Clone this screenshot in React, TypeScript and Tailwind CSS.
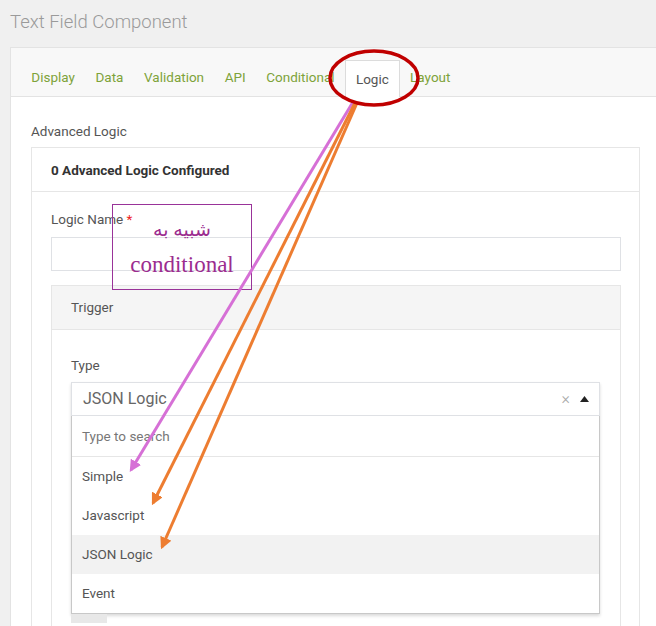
import * as React from "react";

const tabs = ["Display", "Data", "Validation", "API", "Conditional", "Logic", "Layout"];
const options = ["Simple", "Javascript", "JSON Logic", "Event"];

function Annotations() {
  return (
    <svg
      className="pointer-events-none absolute left-0 top-0"
      width={656}
      height={626}
      viewBox="0 0 656 626"
    >
      <defs>
        <marker id="head-pink" markerWidth="4" markerHeight="4" refX="3.2" refY="2" orient="auto">
          <path d="M0,0 L4,2 L0,4 z" fill="#d670d6" />
        </marker>
        <marker id="head-orange" markerWidth="4" markerHeight="4" refX="3.2" refY="2" orient="auto">
          <path d="M0,0 L4,2 L0,4 z" fill="#ed7d31" />
        </marker>
      </defs>
      <line x1="353" y1="102" x2="131" y2="470" stroke="#d670d6" strokeWidth="3" markerEnd="url(#head-pink)" />
      <line x1="355" y1="103" x2="153" y2="503" stroke="#ed7d31" strokeWidth="3" markerEnd="url(#head-orange)" />
      <line x1="357" y1="103" x2="162" y2="547" stroke="#ed7d31" strokeWidth="3" markerEnd="url(#head-orange)" />
      <ellipse cx="374" cy="78" rx="44" ry="27" fill="none" stroke="#c00000" strokeWidth="3.5" />
    </svg>
  );
}

export default function App() {
  return (
    <div className="relative h-[626px] w-[656px] overflow-hidden bg-[#f0f0f0] font-['Roboto',sans-serif]">
      <div className="h-[47px] pl-[10px] pt-[9px] text-[18.5px] font-light text-[#9a9a9a]">
        Text Field Component
      </div>

      <div className="ml-[10px] w-[700px] border-l border-t border-[#e3e3e3] bg-white">
        {/* Tabs */}
        <div className="flex h-[49px] items-end border-b border-[#e3e3e3] bg-[#f8f8f8] pl-[10px]">
          {tabs.map((t) =>
            t === "Logic" ? (
              <div
                key={t}
                className="-mb-px flex h-[37px] items-center border border-b-0 border-[#dcdcdc] bg-white px-[10px] text-[13.5px] text-[#555]"
              >
                {t}
              </div>
            ) : (
              <div key={t} className="flex h-[37px] items-center px-[10.3px] text-[13.5px] text-[#7ea33a]">
                {t}
              </div>
            )
          )}
        </div>

        {/* Content */}
        <div className="pl-[20px] pt-[24px]">
          <div className="mb-[6px] text-[13.5px] text-[#555]">Advanced Logic</div>

          <div className="w-[609px] border border-[#e6e6e6]">
            <div className="flex h-[44px] items-center border-b border-[#e6e6e6] px-[19px] text-[13.5px] font-bold text-[#333]">
              0 Advanced Logic Configured
            </div>

            <div className="px-[19px] pt-[17px]">
              <div className="mb-[7px] text-[13.5px] text-[#555]">
                Logic Name <span className="text-[#e22]">*</span>
              </div>
              <div className="mb-[14px] h-[34px] w-[570px] border border-[#dfe1e5]" />

              <div className="w-[570px] border border-[#e6e6e6]">
                <div className="flex h-[44px] items-center border-b border-[#e6e6e6] bg-[#f5f5f5] px-[19px] text-[13.5px] text-[#555]">
                  Trigger
                </div>
                <div className="h-[300px] px-[19px] pt-[25px]">
                  <div className="mb-[7px] text-[13.5px] text-[#555]">Type</div>

                  <div className="w-[529px] shadow-[0_2px_3px_rgba(0,0,0,0.15)]">
                    <div className="flex h-[34px] items-center justify-between border border-[#dfe1e5] pl-[11px] pr-[10px]">
                      <span className="text-[16px] text-[#666]">JSON Logic</span>
                      <div className="flex items-center gap-[10px]">
                        <span className="text-[16px] font-light text-[#aaa]">×</span>
                        <svg width="9" height="6" viewBox="0 0 9 6">
                          <path d="M0,6 L4.5,0 L9,6 z" fill="#222" />
                        </svg>
                      </div>
                    </div>
                    <div className="border border-t-0 border-[#c8c8c8]">
                      <div className="flex h-[41px] items-center border-b border-[#e6e6e6] px-[10px] text-[13.5px] text-[#777]">
                        Type to search
                      </div>
                      {options.map((o) => (
                        <div
                          key={o}
                          className={
                            o === "JSON Logic"
                              ? "flex h-[39px] items-center bg-[#f2f2f2] px-[10px] text-[13.5px] text-[#555]"
                              : "flex h-[39px] items-center px-[10px] text-[13.5px] text-[#555]"
                          }
                        >
                          {o}
                        </div>
                      ))}
                    </div>
                  </div>
                  <div className="h-[9px] w-[36px] bg-[#e8e8e8]" />
                </div>
              </div>
            </div>
          </div>
        </div>
      </div>

      {/* Note box */}
      <div className="absolute left-[112px] top-[204px] flex h-[86px] w-[140px] flex-col items-center border border-[#993399] pt-[12px] font-['Liberation_Serif','DejaVu_Sans',serif] text-[#9b2c8f]">
        <div dir="rtl" className="text-[19px] leading-[26px]">شبیه به</div>
        <div className="mt-[8px] text-[23px] leading-[28px]">conditional</div>
      </div>

      <Annotations />
    </div>
  );
}
